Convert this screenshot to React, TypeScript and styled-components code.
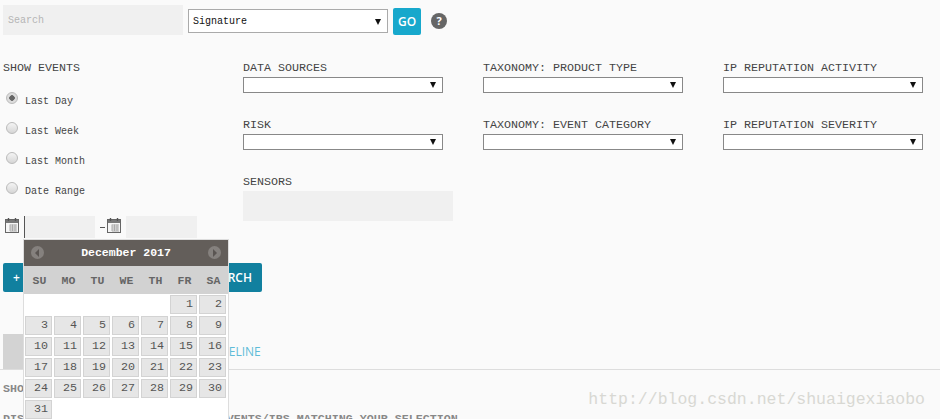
import React from 'react';
import styled, { createGlobalStyle } from 'styled-components';

const GlobalStyle = createGlobalStyle`
  html, body { margin: 0; padding: 0; background: #fafafa; }
  * { box-sizing: border-box; }
`;

const Page = styled.div`
  position: relative;
  width: 940px;
  height: 419px;
  overflow: hidden;
  background: #fafafa;
  font-family: "Liberation Mono", monospace;
  color: #444;
`;

const Content = styled.div`
  padding: 5px 0 0 3px;
`;

const TopBar = styled.div`
  display: flex;
  align-items: center;
  height: 30px;
`;

const SearchInput = styled.div`
  width: 180px;
  height: 30px;
  background: #f0f0f0;
  color: #b5b5b5;
  font-size: 10px;
  line-height: 31px;
  padding-left: 5px;
`;

const SelectBox = styled.div<{ $width: number; $height: number; $light?: boolean }>`
  display: flex;
  align-items: center;
  justify-content: space-between;
  flex-shrink: 0;
  width: ${p => p.$width}px;
  height: ${p => p.$height}px;
  background: #fff;
  border: 1px solid ${p => (p.$light ? '#aaa' : '#888')};
  padding: 0 6px 0 4px;
  font-size: 10px;
  color: #111;
`;

const TopSelect = styled(SelectBox)`
  margin: 2px 0 0 5px;
  padding-top: 1px;
`;

const FieldSelect = styled(SelectBox)`
  margin-top: 2px;
`;

const Caret = styled.span`
  width: 0;
  height: 0;
  border-left: 3px solid transparent;
  border-right: 3px solid transparent;
  border-top: 6px solid #111;
`;

const GoButton = styled.div`
  width: 28px;
  height: 27px;
  margin: 3px 0 0 5px;
  border-radius: 2px;
  background: #17a8cc;
  color: #fff;
  font-family: "Open Sans", sans-serif;
  font-size: 12px;
  font-weight: 600;
  line-height: 27px;
  text-align: center;
`;

const HelpIcon = styled.div`
  width: 16px;
  height: 16px;
  margin: 1px 0 0 10px;
  border-radius: 50%;
  background: #666;
  color: #fff;
  font-family: "Open Sans", sans-serif;
  font-size: 11px;
  font-weight: 700;
  line-height: 16px;
  text-align: center;
`;

const Filters = styled.div`
  display: grid;
  grid-template-columns: repeat(4, 240px);
  margin-top: 26px;
`;

const Heading = styled.div`
  font-size: 11.67px;
  line-height: 14px;
  height: 14px;
  color: #444;
`;

const EventsColumn = styled.div`
  display: flex;
  flex-direction: column;
`;

const RadioGroup = styled.div`
  display: flex;
  flex-direction: column;
  margin-top: 11px;
`;

const RadioRow = styled.div`
  display: flex;
  align-items: center;
  height: 30px;
  padding-left: 3px;
  font-size: 10px;
  color: #444;
`;

const Radio = styled.span<{ $checked?: boolean }>`
  width: 12px;
  height: 12px;
  margin: -6px 7px 0 0;
  border-radius: 50%;
  border: 1px solid #bbb;
  background: ${p =>
    p.$checked
      ? 'radial-gradient(circle, #666 0 2.5px, #ddd 3px)'
      : 'linear-gradient(#f4f4f4, #d6d6d6)'};
`;

const DateRow = styled.div`
  display: flex;
  align-items: flex-start;
  margin-top: 10px;
  padding-left: 2px;
  svg { margin-top: 2px; }
`;

const DateInput = styled.div<{ $caret?: boolean }>`
  width: 71px;
  height: 22px;
  margin-left: 5px;
  background: #f0f0f0;
  border-left: ${p => (p.$caret ? '1px solid #555' : 'none')};
  background-clip: padding-box;
`;

const Dash = styled.span`
  width: 5px;
  height: 1px;
  margin: 11px 2px 0 5px;
  background: #555;
`;

const FieldColumn = styled.div`
  display: flex;
  flex-direction: column;
  gap: 25px;
`;

const Field = styled.div`
  display: flex;
  flex-direction: column;
  height: 32px;
`;

const SensorsBox = styled.div`
  flex-shrink: 0;
  width: 210px;
  height: 30px;
  margin-top: 2px;
  background: #f0f0f0;
`;

const PrimaryButton = styled.div`
  display: flex;
  align-items: center;
  justify-content: space-between;
  width: 259px;
  height: 29px;
  margin-top: 25px;
  padding: 0 10px;
  border-radius: 2px;
  background: #11809f;
  color: #fff;
  font-family: "Open Sans", sans-serif;
  font-size: 12px;
  font-weight: 600;
`;

const ActionRow = styled.div`
  display: flex;
  align-items: center;
  height: 35px;
  margin-top: 42px;
`;

const GrayButton = styled.div`
  width: 100px;
  height: 35px;
  background: #d3d3d3;
`;

const TimelineLink = styled.span`
  margin: 0 0 0 105px;
  color: #5fbcd8;
  font-family: "Open Sans", sans-serif;
  font-size: 12px;
`;

const Rule = styled.div`
  height: 1px;
  margin-left: -3px;
  background: #ddd;
`;

const ShowingLine = styled.div`
  margin-top: 12px;
  font-size: 11.67px;
  line-height: 14px;
  font-weight: 700;
  color: #888;
`;

const ResultLine = styled(ShowingLine)`
  margin-top: 16px;
`;

const Calendar = styled.div`
  position: absolute;
  left: 23px;
  top: 239px;
  width: 206px;
  background: #fff;
  border: 1px solid #ddd;
  border-bottom: none;
  padding-bottom: 4px;
`;

const CalendarHeader = styled.div`
  display: flex;
  align-items: center;
  justify-content: space-between;
  height: 26px;
  padding: 0 7px 1px;
  background: #635e5a;
  color: #fff;
  font-size: 11.5px;
  font-weight: 700;
`;

const NavButton = styled.span<{ $next?: boolean }>`
  display: flex;
  align-items: center;
  justify-content: center;
  width: 13px;
  height: 13px;
  border-radius: 50%;
  background: #85817e;
  &::before {
    content: "";
    width: 0;
    height: 0;
    border-top: 4px solid transparent;
    border-bottom: 4px solid transparent;
    ${p =>
      p.$next
        ? 'border-left: 4px solid #5a5552; margin-left: 1px;'
        : 'border-right: 4px solid #5a5552; margin-right: 1px;'}
  }
`;

const DayNames = styled.div`
  display: grid;
  grid-template-columns: repeat(7, 29px);
  align-items: center;
  height: 28px;
  padding-left: 1px;
  background: #d2d2d2;
`;

const DayName = styled.span`
  text-align: center;
  font-size: 11.5px;
  font-weight: 700;
  color: #666;
`;

const DayGrid = styled.div`
  display: grid;
  grid-template-columns: repeat(7, 27px);
  grid-auto-rows: 19px;
  gap: 2px;
  padding: 1px 0 0 1px;
`;

const DayCell = styled.span<{ $empty?: boolean }>`
  ${p => (p.$empty ? 'visibility: hidden;' : '')}
  padding-right: 3px;
  border: 1px solid #d3d3d3;
  background: #e6e6e6;
  color: #555;
  font-size: 11.67px;
  line-height: 17px;
  text-align: right;
`;

const Watermark = styled.div`
  position: absolute;
  right: 15px;
  top: 390px;
  font-size: 16.5px;
  line-height: 20px;
  color: #d8d8d3;
`;

const CalendarIcon = () => (
  <svg width="14" height="15" viewBox="0 0 14 15">
    <rect x="0.5" y="1.5" width="13" height="13" fill="#f5f5f5" stroke="#666" />
    <rect x="1" y="2" width="12" height="3" fill="#777" />
    <path d="M3.5 0v3M10.5 0v3" stroke="#555" strokeWidth="1.4" />
    <path d="M5 7h7M5 9h7M5 11h7M5 13h7M5 6.5v6.5M7.5 6.5v6.5M10 6.5v6.5" stroke="#aaa" />
  </svg>
);

const dayNames = ['SU', 'MO', 'TU', 'WE', 'TH', 'FR', 'SA'];
const blanks = [0, 1, 2, 3, 4];
const days = Array.from({ length: 31 }, (_, i) => i + 1);

const fields = [
  ['DATA SOURCES', 'RISK'],
  ['TAXONOMY: PRODUCT TYPE', 'TAXONOMY: EVENT CATEGORY'],
  ['IP REPUTATION ACTIVITY', 'IP REPUTATION SEVERITY'],
];

const App = () => {
  return (
    <Page>
      <GlobalStyle />
      <Content>
        <TopBar>
          <SearchInput>Search</SearchInput>
          <TopSelect $width={200} $height={24} $light>
            Signature
            <Caret />
          </TopSelect>
          <GoButton>GO</GoButton>
          <HelpIcon>?</HelpIcon>
        </TopBar>

        <Filters>
          <EventsColumn>
            <Heading>SHOW EVENTS</Heading>
            <RadioGroup>
              <RadioRow><Radio $checked />Last Day</RadioRow>
              <RadioRow><Radio />Last Week</RadioRow>
              <RadioRow><Radio />Last Month</RadioRow>
              <RadioRow><Radio />Date Range</RadioRow>
            </RadioGroup>
            <DateRow>
              <CalendarIcon />
              <DateInput $caret />
              <Dash />
              <CalendarIcon />
              <DateInput />
            </DateRow>
          </EventsColumn>
          {fields.map((col, i) => (
            <FieldColumn key={i}>
              {col.map(label => (
                <Field key={label}>
                  <Heading>{label}</Heading>
                  <FieldSelect $width={200} $height={16}>
                    <span />
                    <Caret />
                  </FieldSelect>
                </Field>
              ))}
              {i === 0 && (
                <Field>
                  <Heading>SENSORS</Heading>
                  <SensorsBox />
                </Field>
              )}
            </FieldColumn>
          ))}
        </Filters>

        <PrimaryButton>
          <span>+</span>
          <span>SAVE SEARCH</span>
        </PrimaryButton>

        <ActionRow>
          <GrayButton />
          <TimelineLink>TIMELINE</TimelineLink>
        </ActionRow>
        <Rule />

        <ShowingLine>SHOWING</ShowingLine>
        <ResultLine>DISPLAYING THE 100 MOST RECENT EVENTS/IPS MATCHING YOUR SELECTION</ResultLine>
      </Content>

      <Calendar>
        <CalendarHeader>
          <NavButton />
          December 2017
          <NavButton $next />
        </CalendarHeader>
        <DayNames>
          {dayNames.map(d => <DayName key={d}>{d}</DayName>)}
        </DayNames>
        <DayGrid>
          {blanks.map(b => <DayCell key={b} $empty />)}
          {days.map(d => <DayCell key={d}>{d}</DayCell>)}
        </DayGrid>
      </Calendar>

      <Watermark>http://blog.csdn.net/shuaigexiaobo</Watermark>
    </Page>
  );
};

export default App;
